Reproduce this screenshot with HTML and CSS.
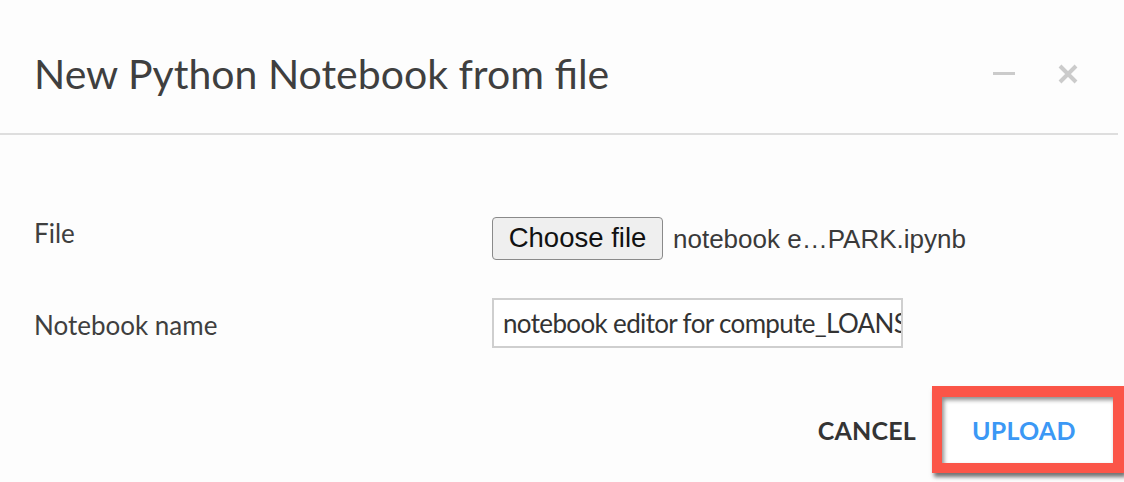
FILE: index.html
```html
<!DOCTYPE html>
<html>
<head>
<meta charset="utf-8">
<link rel="stylesheet" href="styles.css">
</head>
<body>
<div class="dialog">
  <div class="header">
    <h1 class="title">New Python Notebook from file</h1>
    <div class="win-actions">
      <span class="minimize"></span>
      <svg class="close" width="20" height="20" viewBox="0 0 20 20"><path d="M2 2 L18 18 M18 2 L2 18" stroke="#cbcbcb" stroke-width="4" stroke-linecap="butt"/></svg>
    </div>
  </div>
  <div class="body">
    <div class="form">
      <label class="label label-file">File</label>
      <div class="file-control">
        <span class="choose-btn">Choose file</span>
        <span class="file-name">notebook e…PARK.ipynb</span>
      </div>
      <label class="label label-name">Notebook name</label>
      <div class="name-control">
        <div class="text-input"><span class="input-text">notebook editor for compute_LOANS_SPARK</span></div>
      </div>
    </div>
  </div>
  <div class="footer">
    <span class="btn btn-cancel">CANCEL</span>
    <div class="highlight">
      <span class="btn btn-upload">UPLOAD</span>
    </div>
  </div>
</div>
</body>
</html>
```

FILE: styles.css
```css
html, body {
  margin: 0;
  padding: 0;
  background: #fdfdfd;
}
body {
  width: 1124px;
  height: 482px;
  overflow: hidden;
  font-family: Lato, "Open Sans", sans-serif;
  color: #3d3d3d;
}
.dialog {
  width: 1124px;
  display: flex;
  flex-direction: column;
}
.header {
  width: 1118px;
  height: 135px;
  box-sizing: border-box;
  border-bottom: 2px solid #dedede;
  display: flex;
  align-items: center;
  justify-content: space-between;
  padding: 14px 40px 0 34px;
}
.title {
  margin: 0;
  font-weight: 400;
  font-size: 41px;
  line-height: 48px;
  color: #3f3f3f;
}
.win-actions {
  display: flex;
  align-items: center;
  gap: 43px;
}
.minimize {
  display: block;
  width: 22px;
  height: 3px;
  background: #cbcbcb;
}
.close {
  display: block;
}
.body {
  padding: 82px 0 0 34px;
}
.form {
  display: grid;
  grid-template-columns: 458px auto;
  row-gap: 38px;
  align-items: start;
}
.label {
  font-size: 26px;
  line-height: 32px;
  color: #3f3f3f;
}
.label-file {
  padding-top: 0;
}
.label-name {
  padding-top: 11px;
}
.file-control {
  display: flex;
  align-items: center;
  gap: 10px;
}
.choose-btn {
  box-sizing: border-box;
  width: 171px;
  height: 43px;
  border: 1.5px solid #8a8a8a;
  border-radius: 4px;
  background: #efefef;
  font-family: "Liberation Sans", Arial, sans-serif;
  font-size: 27.5px;
  line-height: 40px;
  text-align: center;
  color: #111;
}
.file-name {
  font-family: "Liberation Sans", Arial, sans-serif;
  font-size: 26px;
  color: #3a3a3a;
  position: relative;
  top: 1px;
}
.text-input {
  box-sizing: border-box;
  width: 411px;
  height: 50px;
  border: 2px solid #cfcfcf;
  background: #fff;
  overflow: hidden;
  white-space: nowrap;
  padding: 0 0 0 9px;
  display: flex;
  align-items: center;
}
.input-text {
  font-size: 26px;
  line-height: 32px;
  letter-spacing: -0.65px;
  color: #333;
}
.footer {
  display: flex;
  justify-content: flex-end;
  align-items: center;
  gap: 16px;
  padding-top: 38px;
}
.btn {
  font-weight: 700;
  font-size: 25px;
  line-height: 30px;
  letter-spacing: 0.2px;
}
.btn-cancel {
  color: #343434;
}
.btn-upload {
  color: #3b98f5;
}
.highlight {
  box-sizing: border-box;
  width: 192px;
  height: 87px;
  border: 10px solid #fb5548;
  border-top-width: 11px;
  border-right-width: 11px;
  display: flex;
  align-items: center;
  padding-left: 30px;
  box-shadow: 2px 4px 4px rgba(0,0,0,0.55), inset 2px 3px 4px rgba(0,0,0,0.45);
  background: #fff;
}
```
